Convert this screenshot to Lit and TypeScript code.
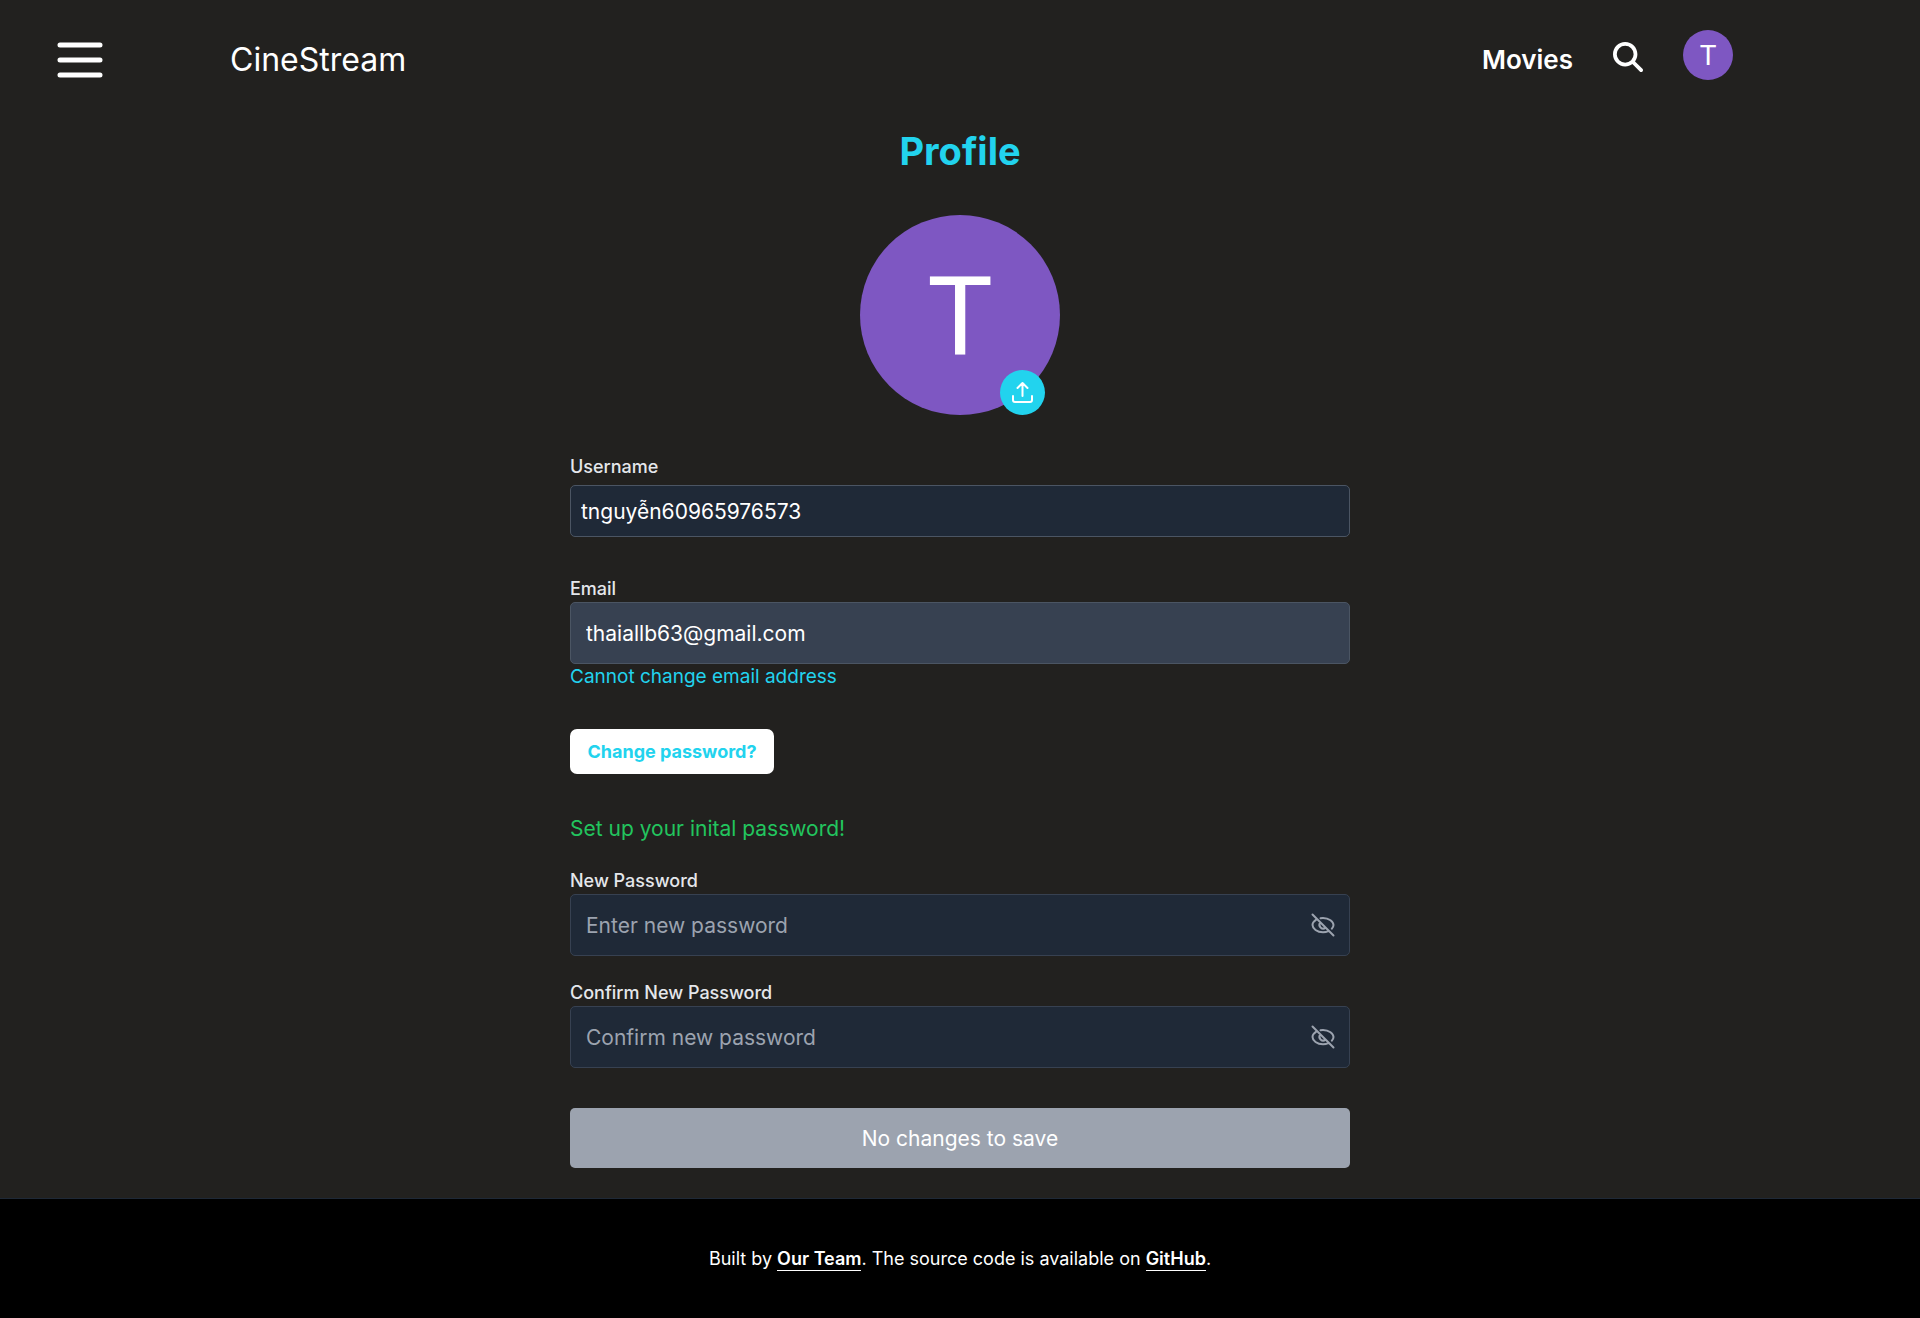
import { LitElement, html, css } from "lit";
import { customElement, property, state } from "lit/decorators.js";

@customElement("password-field")
class PasswordField extends LitElement {
  @property() label = "";
  @property() placeholder = "";
  @state() private shown = false;

  static styles = css`
    :host { display: block; }
    * { box-sizing: border-box; }
    .label { display: block; font-size: 18px; line-height: 26px; font-weight: 500; color: #e5e7eb; }
    .box { display: flex; align-items: center; height: 62px; padding: 0 14px; border: 1px solid #374151; border-radius: 5px; background: #1f2937; }
    .input { flex: 1; min-width: 0; height: 100%; padding: 0 1px; border: 0; outline: 0; background: none; color: #fff; font-family: inherit; font-size: 21px; }
    .input::placeholder { color: #9ca3af; opacity: 1; }
    .toggle { display: flex; padding: 0; border: 0; background: none; color: #9ca3af; cursor: pointer; }
    .icon { width: 24px; height: 24px; }
  `;

  render() {
    return html`
      <label class="label" for="field">${this.label}</label>
      <div class="box">
        <input class="input" id="field" type=${this.shown ? "text" : "password"} placeholder=${this.placeholder} />
        <button class="toggle" type="button" aria-label="Toggle password visibility" @click=${() => (this.shown = !this.shown)}>
          <svg class="icon" viewBox="0 0 24 24" fill="none" stroke="currentColor" stroke-width="2" stroke-linecap="round">
            <path d="M9.500 5.200c.8-.2 1.600-.3 2.500-.3 6 0 10.500 3.800 10.500 7.200 0 1.300-.6 2.600-1.700 3.600M5.200 6.700C3 8.100 1.500 10.100 1.500 12.100c0 3.400 4.500 7.200 10.500 7.200 2 0 3.800-.4 5.300-1.100M9.300 9.500A3.700 3.700 0 0 0 14.500 14.700M1.500 1.500l21 21" />
          </svg>
        </button>
      </div>
    `;
  }
}

@customElement("app-root")
class AppRoot extends LitElement {
  static styles = css`
    :host { display: block; font-family: Inter, "Open Sans", sans-serif; color: #fff; }
    * { box-sizing: border-box; }
    .page { display: flex; flex-direction: column; min-height: 100vh; background: #22211f; }
    .header { display: flex; align-items: center; height: 120px; padding: 0 187px 0 50px; }
    .menu, .search, .upload { display: flex; align-items: center; justify-content: center; padding: 0; border: 0; background: none; color: #fff; cursor: pointer; }
    .menu-icon { width: 60px; height: 60px; }
    .brand { margin-left: 120px; font-size: 32px; line-height: 40px; color: #fff; text-decoration: none; }
    .nav { display: flex; align-items: center; gap: 40px; margin-left: auto; }
    .nav-link { font-size: 26px; line-height: 40px; font-weight: 600; color: #fff; text-decoration: none; }
    .nav-tools { display: flex; align-items: center; gap: 40px; padding-bottom: 10px; }
    .search { padding-top: 4px; }
    .search-icon { width: 30px; height: 30px; }
    .avatar { display: flex; align-items: center; justify-content: center; border-radius: 50%; background: #7e57c2; font-family: Roboto, sans-serif; }
    .avatar-small { width: 50px; height: 50px; padding-top: 2px; font-size: 28px; line-height: 32px; }
    .avatar-large { width: 200px; height: 200px; padding-top: 6px; font-size: 110px; line-height: 128px; }
    .main { display: flex; flex-direction: column; width: 100%; max-width: 780px; margin: 0 auto; padding-bottom: 30px; }
    .title { margin: 4px 0 36px; text-align: center; font-size: 38px; line-height: 55px; font-weight: 700; color: #22d3ee; }
    .portrait { position: relative; align-self: center; }
    .upload { position: absolute; right: 15px; bottom: 0; width: 45px; height: 45px; border-radius: 50%; background: #22d3ee; }
    .upload-icon { width: 25px; height: 25px; }
    .field { display: flex; flex-direction: column; }
    .username { gap: 5px; margin-top: 39px; }
    .email { margin-top: 39px; }
    .label { font-size: 18px; line-height: 26px; font-weight: 500; color: #e5e7eb; }
    .input { width: 100%; border: 1px solid #4b5563; border-radius: 5px; outline: 0; color: #fff; font-family: inherit; font-size: 21px; }
    .input-name { height: 52px; padding: 0 10px; background: #1f2937; }
    .input-email { height: 62px; padding: 0 15px; background: #374151; }
    .hint { font-size: 19px; line-height: 25px; color: #22d3ee; }
    .change { align-self: flex-start; min-width: 204px; height: 45px; margin-top: 40px; padding: 0 15px; border: 0; border-radius: 7px; background: #fff; color: #22d3ee; font-family: inherit; font-size: 18px; font-weight: 700; cursor: pointer; }
    .notice { margin: 40px 0 24px; font-size: 21px; line-height: 30px; color: #22c55e; }
    .passwords { display: flex; flex-direction: column; gap: 24px; }
    .save { height: 60px; margin-top: 40px; border: 0; border-radius: 5px; background: #9ca3af; color: #fff; font-family: inherit; font-size: 21px; }
    .footer { flex: 1; display: flex; align-items: center; justify-content: center; min-height: 120px; border-top: 1px solid #1f2937; background: #000; font-size: 18px; line-height: 24px; }
    .footer-text { margin: 0; }
    .footer-link { padding-bottom: 1px; border-bottom: 1px solid #fff; font-weight: 600; color: #fff; text-decoration: none; }
  `;

  render() {
    return html`
      <div class="page">
        <header class="header">
          <button class="menu" type="button" aria-label="Menu">
            <svg class="menu-icon" viewBox="0 0 24 24" fill="none" stroke="currentColor" stroke-width="2" stroke-linecap="round"><path d="M4 6h16M4 12h16M4 18h16" /></svg>
          </button>
          <a class="brand" href="#">CineStream</a>
          <nav class="nav">
            <a class="nav-link" href="#">Movies</a>
            <div class="nav-tools">
              <button class="search" type="button" aria-label="Search">
                <svg class="search-icon" viewBox="0 0 512 512" fill="currentColor"><path d="M416 208c0 45.900-14.900 88.300-40 122.700L502.600 457.400c12.500 12.500 12.500 32.800 0 45.300s-32.800 12.500-45.300 0L330.700 376c-34.400 25.200-76.800 40-122.700 40C93.100 416 0 322.900 0 208S93.100 0 208 0S416 93.100 416 208zM208 352a144 144 0 1 0 0-288 144 144 0 1 0 0 288z" /></svg>
              </button>
              <span class="avatar avatar-small">T</span>
            </div>
          </nav>
        </header>
        <main class="main">
          <h1 class="title">Profile</h1>
          <div class="portrait">
            <div class="avatar avatar-large">T</div>
            <button class="upload" type="button" aria-label="Upload photo">
              <svg class="upload-icon" viewBox="0 0 25 25" fill="none" stroke="currentColor" stroke-width="2" stroke-linecap="round" stroke-linejoin="round"><path d="M12.500 16V3M7.500 8l5-5 5 5M3 16v4a2 2 0 0 0 2 2h15a2 2 0 0 0 2-2v-4" /></svg>
            </button>
          </div>
          <div class="field username">
            <label class="label" for="username">Username</label>
            <input class="input input-name" id="username" type="text" value="tnguyễn60965976573" />
          </div>
          <div class="field email">
            <label class="label" for="email">Email</label>
            <input class="input input-email" id="email" type="email" value="thaiallb63@gmail.com" readonly />
            <span class="hint">Cannot change email address</span>
          </div>
          <button class="change" type="button">Change password?</button>
          <p class="notice">Set up your inital password!</p>
          <div class="passwords">
            <password-field label="New Password" placeholder="Enter new password"></password-field>
            <password-field label="Confirm New Password" placeholder="Confirm new password"></password-field>
          </div>
          <button class="save" type="submit" disabled>No changes to save</button>
        </main>
        <footer class="footer">
          <p class="footer-text">Built by <a class="footer-link" href="#">Our Team</a>. The source code is available on <a class="footer-link" href="#">GitHub</a>.</p>
        </footer>
      </div>
    `;
  }
}
